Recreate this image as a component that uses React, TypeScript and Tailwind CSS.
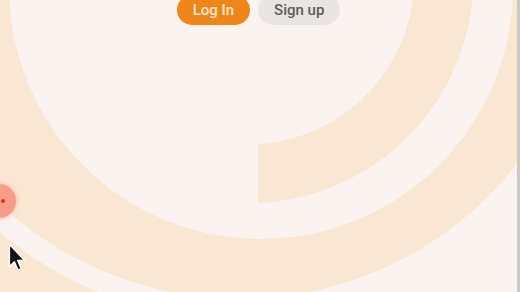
import React from "react";

function Rings() {
  return (
    <svg
      className="absolute inset-0"
      width="517"
      height="292"
      viewBox="0 0 517 292"
      aria-hidden="true"
    >
      <defs>
        <clipPath id="leftHalf">
          <rect x="-100" y="-100" width="358" height="500" />
        </clipPath>
      </defs>
      {/* outer band, left side only */}
      <path
        clipPath="url(#leftHalf)"
        fillRule="evenodd"
        fill="#f9e7d4"
        d="M 240 -502 A 450 450 0 1 0 240.01 -502 Z M 240 -424 A 372 372 0 1 1 239.99 -424 Z"
      />
      {/* middle band, full ring */}
      <path
        fillRule="evenodd"
        fill="#f9e7d4"
        d="M 240 -403 A 351 351 0 1 0 240.01 -403 Z M 261 -265 A 252 252 0 1 1 260.99 -265 Z"
      />
      {/* inner band, right side ending at the bottom */}
      <path
        fill="#f9e7d4"
        d="M 258 144 A 166.3 166.3 0 0 0 392 -105 L 443 -135 A 225.2 225.2 0 0 1 258 203 Z"
      />
    </svg>
  );
}

function Cursor() {
  return (
    <svg
      className="absolute left-[8px] top-[243px]"
      width="18"
      height="29"
      viewBox="0 0 13 21"
      aria-hidden="true"
    >
      <path
        d="M1 1 L1 17 L4.6 13.6 L7.2 19.6 L9.6 18.6 L7 12.6 L12 12.6 Z"
        fill="#111"
        stroke="#fff"
        strokeWidth="1"
        strokeLinejoin="round"
      />
    </svg>
  );
}

export default function App() {
  return (
    <div className="relative w-[520px] h-[292px] overflow-hidden bg-[#faf3f0] border-r-[3px] border-[#ccc8c5] font-['Roboto',sans-serif]">
      <Rings />

      <div className="relative flex justify-center gap-2 -mt-[5px]">
        <button className="h-[30px] px-4 rounded-full bg-[#f0861a] text-[#fdebcf] text-[15px] font-medium leading-none">
          Log In
        </button>
        <button className="h-[30px] px-4 rounded-full bg-[#e9e5e2] text-[#5f5c5a] text-[15px] font-medium leading-none">
          Sign up
        </button>
      </div>

      {/* touch indicator */}
      <div className="absolute -left-[18px] top-[184px] w-[34px] h-[34px] rounded-full bg-[#f79c88] shadow-[0_0_5px_#f7ab9a] flex items-center justify-end pr-[11px]">
        <div className="w-[4px] h-[4px] rounded-full bg-[#d8301f]" />
      </div>

      <Cursor />
    </div>
  );
}
